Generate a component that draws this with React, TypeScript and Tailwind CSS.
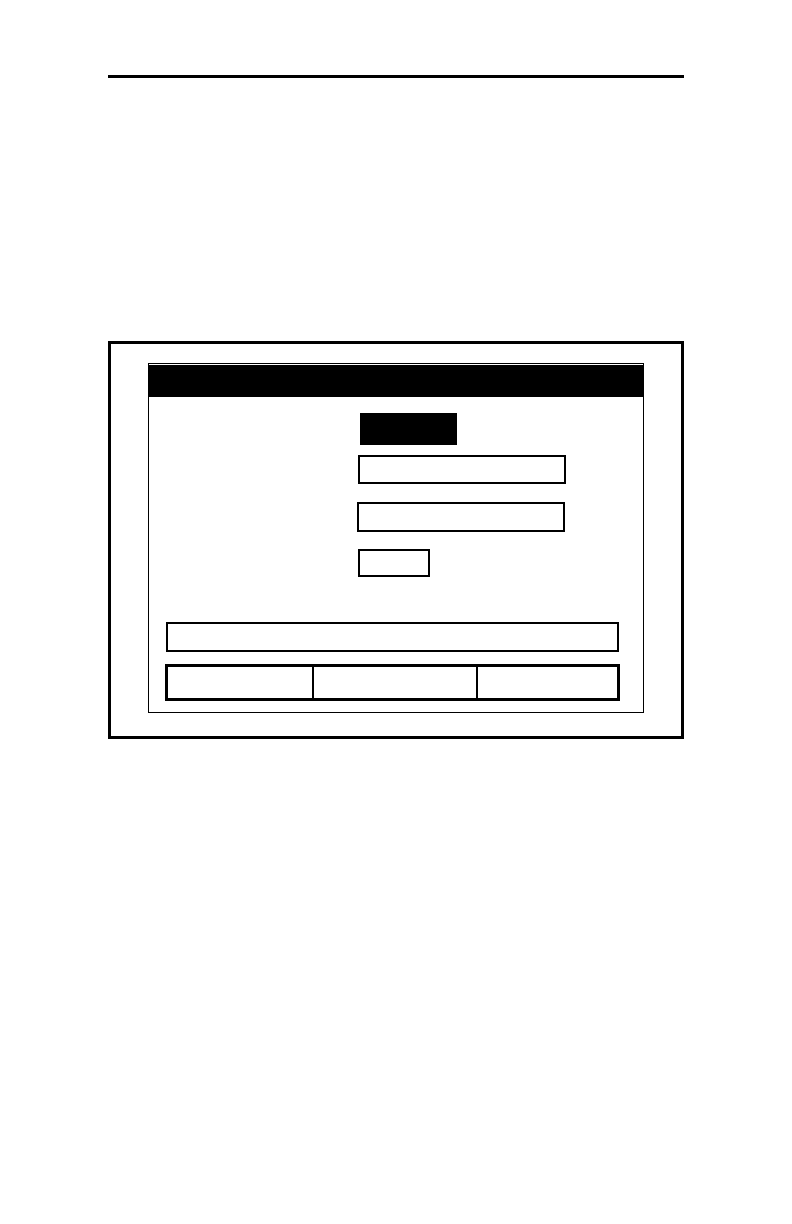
import React from "react";

export default function App() {
  return (
    <div className="w-[792px] h-[1224px] bg-white flex flex-col" style={{ fontFamily: '"Liberation Sans", Arial, sans-serif' }}>
      <div className="mt-[75px] ml-[108px] w-[576px] h-[3px] bg-black" />
      <div className="mt-[263px] ml-[108px] w-[576px] h-[398px] border-[3px] border-black pt-[19px] px-[37px]">
        <div className="w-[496px] h-[350px] border border-black flex flex-col">
          <div className="mt-px h-[32px] bg-black" />
          <div className="mt-[16px] ml-[211px] w-[97px] h-[32px] bg-black" />
          <div className="mt-[10px] ml-[209px] w-[208px] h-[29px] border-2 border-black" />
          <div className="mt-[18px] ml-[208px] w-[208px] h-[30px] border-2 border-black" />
          <div className="mt-[17px] ml-[209px] w-[72px] h-[28px] border-2 border-black" />
          <div className="mt-[45px] ml-[17px] w-[453px] h-[30px] border-2 border-black" />
          <div className="mt-[12px] ml-[16px] w-[455px] h-[37px] border-[3px] border-black flex">
            <div className="w-[146px] h-full border-r-2 border-black" />
            <div className="w-[164px] h-full border-r-2 border-black" />
            <div className="flex-1 h-full" />
          </div>
        </div>
      </div>
    </div>
  );
}
